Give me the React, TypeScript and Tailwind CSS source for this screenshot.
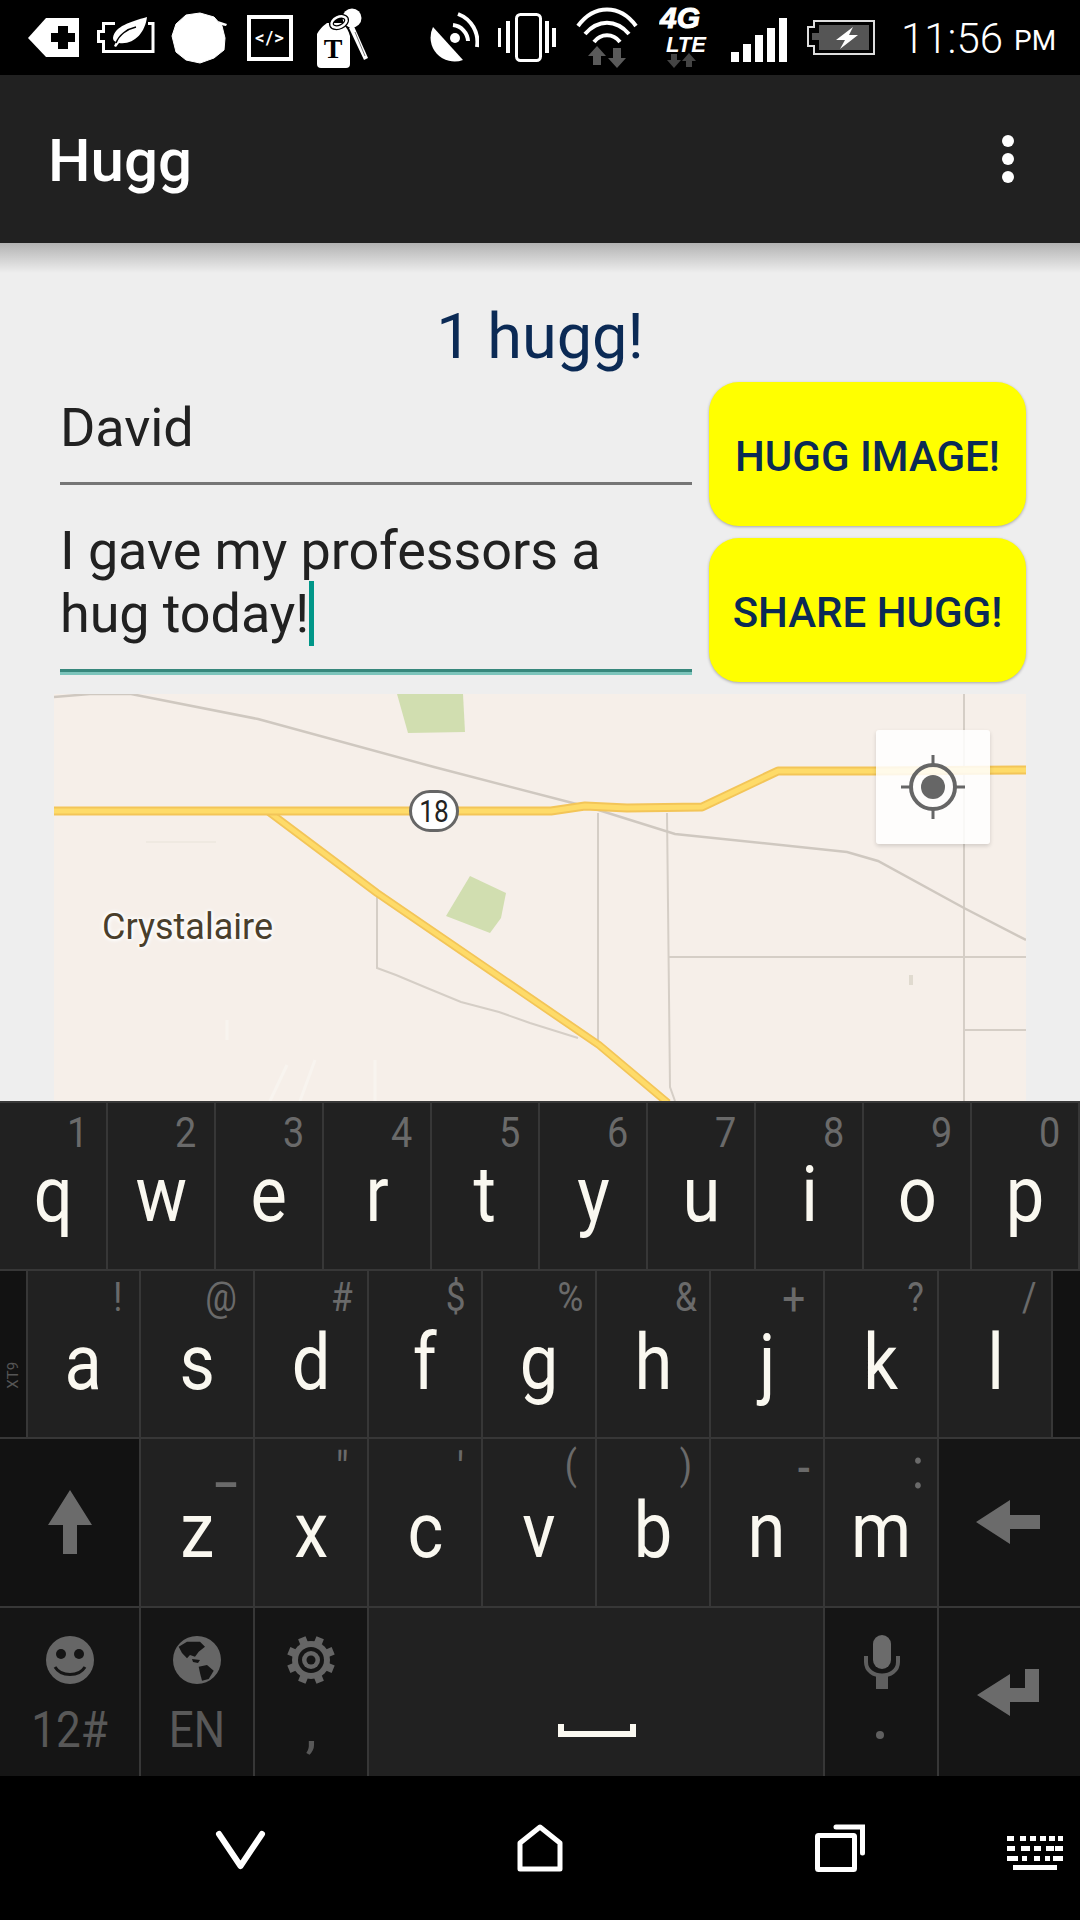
import type { ReactNode } from "react";

const Ico = ({ x, y, w, h, className, children }: { x: number; y: number; w: number; h: number; className?: string; children: ReactNode }) => (
  <svg width={w} height={h} viewBox={`${x} ${y} ${w} ${h}`} className={`block shrink-0 ${className ?? ""}`}>
    {children}
  </svg>
);

const GRAY = "#6b6b6b";

const StatusBar = () => (
  <div className="flex h-[75px] shrink-0 items-start bg-black pl-[28px] font-['Roboto',sans-serif] text-white">
    <Ico x={28} y={0} w={51} h={75}>
      <path d="M28 38 L46 18 H79 V57 H46 Z" fill="#fff" />
      <path d="M58 26 H68 V33 H75 V42 H68 V49 H58 V42 H51 V33 H58 Z" fill="#000" />
    </Ico>
    <Ico x={97} y={0} w={58} h={75} className="ml-[18px]">
      <path d="M115 23.500 H103.500 V31.500 H98.500 V41.500 H103.500 V51.500 H153 V23.500 H148" fill="none" stroke="#fff" strokeWidth="3" />
      <path d="M113 38 C115 26 130 22 147 17 C145 33 134 45 119 43 L116 47 L114 46 L116 42 C114 41 113 40 113 38 Z" fill="#fff" />
      <path d="M116 43 C119 35 127 29 136 27" fill="none" stroke="#000" strokeWidth="1.500" />
    </Ico>
    <Ico x={171} y={0} w={56} h={75} className="ml-[16px]">
      <path d="M172 36 L176 24 L186 15 L200 13 L214 17 L222 26 L225 38 L224 50 L214 58 L200 63 L186 60 L176 52 Z" fill="#fff" stroke="#fff" strokeWidth="1" strokeLinejoin="round" />
      <path d="M218 21 L227 24 L226 26 L220 25 Z" fill="#fff" />
    </Ico>
    <div className="ml-[20px] mt-[15px] flex h-[46px] w-[46px] shrink-0 items-center justify-center border-[4px] border-white text-[19px] font-medium tracking-[1px]">
      &lt;/&gt;
    </div>
    <Ico x={317} y={0} w={51} h={75} className="ml-[24px]">
      <circle cx="352" cy="18" r="9.500" fill="#fff" />
      <path d="M353 24 L368 58 L364 60 L349 28 Z" fill="#fff" />
      <path d="M355 32 L365 56" stroke="#777" strokeWidth="1" />
      <path d="M327 23 H342 Q348 28 350 36 V64 Q350 68 346 68 H321 Q317 68 317 64 V34 Q320 28 327 23 Z" fill="#fff" />
      <ellipse cx="339" cy="22" rx="8" ry="5" transform="rotate(-25 339 22)" fill="none" stroke="#000" strokeWidth="5" />
      <ellipse cx="339" cy="22" rx="8" ry="5" transform="rotate(-25 339 22)" fill="none" stroke="#fff" strokeWidth="2.500" />
      <text x="333" y="58" textAnchor="middle" fontFamily="'Liberation Serif',serif" fontWeight="700" fontSize="28" fill="#000">T</text>
    </Ico>
    <Ico x={430} y={0} w={49} h={75} className="ml-[62px]">
      <path d="M433 27 A24 24 0 0 0 463 60 Z" fill="#fff" />
      <circle cx="455" cy="38" r="5" fill="#fff" />
      <path d="M453 25 A17 17 0 0 1 468 41" fill="none" stroke="#fff" strokeWidth="4" />
      <path d="M458 14 A30 30 0 0 1 477 47" fill="none" stroke="#fff" strokeWidth="4" />
    </Ico>
    <Ico x={498} y={0} w={58} h={75} className="ml-[19px]">
      <rect x="498" y="28" width="3" height="19" fill="#fff" />
      <rect x="506" y="21" width="4" height="32" fill="#fff" />
      <rect x="516.500" y="14.500" width="24" height="46" rx="4" fill="none" stroke="#fff" strokeWidth="3" />
      <rect x="545" y="21" width="4" height="32" fill="#fff" />
      <rect x="552" y="28" width="4" height="19" fill="#fff" />
    </Ico>
    <Ico x={576} y={0} w={62} h={75} className="ml-[20px]">
      <g fill="none" stroke="#fff" strokeWidth="4">
        <path d="M578 26 C594 4 620 4 636 26" />
        <path d="M585 34 C598 19 616 19 629 34" />
        <path d="M594 42 C601 33 613 33 620 42" />
      </g>
      <path d="M597 46 L606 56 H601 V65 H593 V56 H588 Z" fill="#5a5a5a" />
      <path d="M617 68 L626 58 H621 V48 H613 V58 H608 Z" fill="#5a5a5a" />
    </Ico>
    <Ico x={659} y={0} w={48} h={75} className="ml-[21px]">
      <text x="660" y="28" fontFamily="'Liberation Sans',sans-serif" fontWeight="700" fontStyle="italic" fontSize="30" fill="#fff" stroke="#fff" strokeWidth="1">4G</text>
      <text x="666" y="52" fontFamily="'Liberation Sans',sans-serif" fontStyle="italic" fontSize="22" fontWeight="700" fill="#fff">LTE</text>
      <path d="M674 68 L667 60 H671 V54 H677 V60 H681 Z" fill="#444" />
      <path d="M689 53 L696 61 H692 V67 H686 V61 H682 Z" fill="#444" />
    </Ico>
    <Ico x={731} y={0} w={56} h={75} className="ml-[24px]">
      <rect x="731" y="52" width="8" height="10" fill="#fff" />
      <rect x="743" y="44" width="8" height="18" fill="#fff" />
      <rect x="755" y="35" width="8" height="27" fill="#fff" />
      <rect x="767" y="28" width="8" height="34" fill="#fff" />
      <rect x="779" y="18" width="8" height="44" fill="#fff" />
    </Ico>
    <Ico x={807} y={0} w={68} h={75} className="ml-[20px]">
      <path d="M814 27 H808 V46 H814 V54 H874 V21 H814 Z" fill="none" stroke="#ddd" strokeWidth="2" />
      <rect x="819" y="25" width="50" height="25" fill="#555" />
      <rect x="812" y="33" width="8" height="7" fill="#555" />
      <path d="M853 27 L836 40 H845 L840 49 L858 35 H849 Z" fill="#fff" />
    </Ico>
    <div className="ml-[26px] flex h-[75px] shrink-0 items-start whitespace-nowrap pt-[14px] leading-[50px]">
      <span className="text-[42px] font-light">11:56</span>
      <span className="ml-[11px] text-[28px] leading-[54px]">PM</span>
    </div>
  </div>
);

const AppBar = () => (
  <div className="relative z-10 flex h-[168px] shrink-0 items-center justify-between bg-[#212121] pl-[48px] pr-[66px] font-['Roboto',sans-serif]">
    <span className="pt-[4px] text-[60px] font-medium leading-none text-white">Hugg</span>
    <div className="flex flex-col gap-[6px]">
      <span className="h-[12px] w-[12px] rounded-full bg-white" />
      <span className="h-[12px] w-[12px] rounded-full bg-white" />
      <span className="h-[12px] w-[12px] rounded-full bg-white" />
    </div>
    <div className="absolute left-0 right-0 top-full h-[30px] bg-linear-to-b from-black/25 to-transparent" />
  </div>
);

const MapPanel = () => (
  <div className="relative h-[407px] w-[972px] shrink-0 overflow-hidden bg-[#f6efe9]">
    <Ico x={54} y={694} w={972} h={407}>
      <path d="M397 694 H463 L465 732 L408 733 Z" fill="#d1deb0" />
      <path d="M470 876 L506 893 L501 918 L490 933 L446 916 Z" fill="#d1deb0" />
      <g fill="none" stroke="#f8f4ef" strokeWidth="3">
        <path d="M227 1020 V1040" />
        <path d="M287 1065 L270 1101" />
        <path d="M315 1060 L300 1101" />
        <path d="M375 1060 V1101" />
      </g>
      <g fill="none" stroke="#d5cec6" strokeWidth="2">
        <path d="M964 694 V1101" />
        <path d="M669 957 H1026" />
        <path d="M964 1030 H1026" />
        <path d="M598 813 V1045" />
        <path d="M667 813 L670 1087 L675 1101" />
        <path d="M377 893 V968 L396 975 L427 988 L461 1002 L499 1012 L530 1023 L578 1038" />
        <path d="M146 842 H216" stroke="#efe9e1" />
        <path d="M911 975 V985" strokeWidth="4" stroke="#e0dacf" />
      </g>
      <path d="M54 697 L90 694 H131 L258 719 L434 767 L592 808 L675 834 L847 852 L878 861 L964 908 L1026 940" fill="none" stroke="#cfc8c0" strokeWidth="2.500" />
      <g fill="none" strokeLinejoin="round">
        <path d="M269 812 L377 893 L599 1045 L668 1103" stroke="#f3c558" strokeWidth="8" />
        <path d="M269 812 L377 893 L599 1045 L668 1103" stroke="#fedb69" strokeWidth="4.500" />
        <path d="M54 811 H551 L585 806 L627 808 L702 807 L778 771 H876 L1026 770" stroke="#f3c558" strokeWidth="9" />
        <path d="M54 811 H551 L585 806 L627 808 L702 807 L778 771 H876 L1026 770" stroke="#fedb69" strokeWidth="5" />
      </g>
    </Ico>
    <div className="absolute left-[355px] top-[96px] flex h-[42px] w-[50px] items-center justify-center rounded-[21px] border-[3px] border-[#666] bg-white font-['Roboto',sans-serif] leading-none text-[#222]">
      <span className="inline-block scale-x-[.82] text-[32px]">18</span>
    </div>
    <div className="absolute left-[48px] top-[215px] font-['Roboto',sans-serif] text-[36px] leading-none text-[#4a3f2c] [text-shadow:0_0_3px_#fff,0_0_4px_#fff,0_0_5px_#fff,0_0_6px_#fff]">
      Crystalaire
    </div>
    <div className="absolute left-[822px] top-[36px] flex h-[114px] w-[114px] items-center justify-center rounded-[3px] bg-white/85 shadow-[0_2px_4px_rgba(0,0,0,0.15)]">
      <svg width="66" height="66" viewBox="0 0 66 66">
        <circle cx="33" cy="33" r="22" fill="none" stroke="#666" strokeWidth="4" />
        <circle cx="33" cy="33" r="12" fill="#666" />
        <path d="M33 1 V11 M33 55 V65 M1 33 H11 M55 33 H65" stroke="#666" strokeWidth="3" />
      </svg>
    </div>
  </div>
);

const Content = () => (
  <main className="flex min-h-0 flex-1 flex-col bg-[#eeeeee] px-[54px] font-['Roboto',sans-serif]">
    <div className="h-[139px] pt-[57px] text-center text-[63px] leading-[74px] text-[#0b2a55]">1 hugg!</div>
    <div className="flex h-[300px] shrink-0 justify-between pl-[6px]">
      <div className="flex w-[632px] flex-col text-[54px] leading-[63px] tracking-[-0.1px] text-[#212121]">
        <div className="h-[103px] border-b-[3px] border-[#757575] pt-[14px]">David</div>
        <div className="h-[184px] pt-[34px]">
          I gave my professors a
          <br />
          hug today!
          <span className="relative">
            <span className="absolute left-[0px] top-[-1px] h-[65px] w-[5px] bg-[#009688]" />
          </span>
        </div>
        <div className="h-[3px] bg-[#37877c]" />
        <div className="h-[3px] bg-[#7cc4bb]" />
      </div>
      <div className="flex w-[317px] flex-col gap-[12px] text-[42px] font-medium text-[#0b2a55]">
        <div className="flex h-[144px] items-center justify-center rounded-[30px] bg-[#ffff00] pt-[4px] shadow-[0_1px_3px_rgba(0,0,0,0.3)]">HUGG IMAGE!</div>
        <div className="flex h-[144px] items-center justify-center rounded-[30px] bg-[#ffff00] pt-[4px] shadow-[0_1px_3px_rgba(0,0,0,0.3)]">SHARE HUGG!</div>
      </div>
    </div>
    <div className="mt-[12px]">
      <MapPanel />
    </div>
  </main>
);

const Key = ({ w, label, hint, hintClass }: { w: string; label: string; hint: string; hintClass: string }) => (
  <div className={`relative flex h-full shrink-0 justify-center border-r-2 border-[#373737] bg-[#212121] pt-[53px] ${w}`}>
    <span className="inline-block scale-x-[.88] text-[78px] leading-none text-[#faf8f0]">{label}</span>
    <span className={`absolute origin-right scale-x-[.88] leading-none text-[#6a6a6a] ${hintClass}`}>{hint}</span>
  </div>
);

const row1 = [
  ["q", "1"],
  ["w", "2"],
  ["e", "3"],
  ["r", "4"],
  ["t", "5"],
  ["y", "6"],
  ["u", "7"],
  ["i", "8"],
  ["o", "9"],
  ["p", "0"],
];
const row2 = [
  ["a", "!", "right-[17px] top-[7px] text-[40px]", "w-[113px]"],
  ["s", "@", "right-[16px] top-[7px] text-[40px]", "w-[114px]"],
  ["d", "#", "right-[14px] top-[7px] text-[40px]", "w-[114px]"],
  ["f", "$", "right-[16px] top-[7px] text-[40px]", "w-[114px]"],
  ["g", "%", "right-[12px] top-[7px] text-[40px]", "w-[114px]"],
  ["h", "&", "right-[12px] top-[7px] text-[40px]", "w-[114px]"],
  ["j", "+", "right-[18px] top-[5px] text-[46px]", "w-[114px]"],
  ["k", "?", "right-[13px] top-[7px] text-[40px]", "w-[114px]"],
  ["l", "/", "right-[14px] top-[7px] text-[40px]", "w-[114px]"],
];
const row3 = [
  ["z", "_", "right-[17px] top-[0px] text-[52px] font-medium"],
  ["x", '"', "right-[18px] top-[7px] text-[46px]"],
  ["c", "'", "right-[17px] top-[7px] text-[46px]"],
  ["v", "(", "right-[18px] top-[7px] text-[40px]"],
  ["b", ")", "right-[17px] top-[7px] text-[40px]"],
  ["n", "-", "right-[12px] top-[6px] text-[46px] font-medium"],
  ["m", ":", "right-[13px] top-[0px] text-[58px]"],
];

const gearTeeth = [0, 45, 90, 135, 180, 225, 270, 315];

const Keyboard = () => (
  <div className="flex h-[675px] shrink-0 flex-col border-t-2 border-[#383838] bg-[#212121] font-['Roboto',sans-serif]">
    <div className="flex h-[168px] shrink-0 border-b-2 border-[#373737]">
      {row1.map(([k, h]) => (
        <Key key={k} w="w-[108px]" label={k} hint={h} hintClass="right-[18px] top-[8px] text-[43px]" />
      ))}
    </div>
    <div className="flex h-[168px] shrink-0 border-b-2 border-[#373737]">
      <div className="flex h-full w-[28px] shrink-0 items-center justify-center border-r-2 border-[#373737] bg-[#121212] pt-[42px]">
        <span className="-rotate-90 text-[15px] text-[#555]">XT9</span>
      </div>
      {row2.map(([k, h, c, w]) => (
        <Key key={k} w={w} label={k} hint={h} hintClass={c} />
      ))}
      <div className="h-full flex-1 bg-[#121212]" />
    </div>
    <div className="flex h-[169px] shrink-0 border-b-2 border-[#373737]">
      <div className="h-full w-[141px] shrink-0 border-r-2 border-[#373737] bg-[#121212]">
        <Ico x={0} y={1439} w={139} h={167}>
          <path d="M70 1490 L92 1525 H77 V1554 H63 V1525 H48 Z" fill={GRAY} />
        </Ico>
      </div>
      {row3.map(([k, h, c]) => (
        <Key key={k} w="w-[114px]" label={k} hint={h} hintClass={c} />
      ))}
      <div className="h-full flex-1 bg-[#151515]">
        <Ico x={939} y={1439} w={141} h={167}>
          <path d="M976 1522 L1010 1500 V1515 H1040 V1529 H1010 V1544 Z" fill={GRAY} />
        </Ico>
      </div>
    </div>
    <div className="flex h-[168px] shrink-0">
      <div className="flex h-full w-[141px] shrink-0 flex-col items-center border-r-2 border-[#373737] bg-[#151515] pt-[27px] text-[50px] leading-none text-[#585858]">
        <svg width="50" height="50" viewBox="0 0 50 50">
          <circle cx="25" cy="25" r="24" fill="#666" />
          <circle cx="16" cy="19" r="5" fill="#151515" />
          <circle cx="34" cy="19" r="5" fill="#151515" />
          <path d="M10 32 C16 42 34 42 40 32" fill="none" stroke="#151515" strokeWidth="3" />
        </svg>
        <span className="mt-[20px] inline-block scale-x-[.88]">12#</span>
      </div>
      <div className="flex h-full w-[114px] shrink-0 flex-col items-center border-r-2 border-[#373737] bg-[#151515] pt-[27px] text-[50px] leading-none text-[#585858]">
        <svg width="50" height="50" viewBox="0 0 50 50">
          <circle cx="25" cy="25" r="24" fill="#666" />
          <path d="M6.700 11.700 L15 6.700 L28 6.700 L33 11.700 L26.700 16.700 L23 21.700 L18 20 L15 23.300 L10 18 Z" fill="#151515" />
          <path d="M20 24 L28 25 L26 28 L21 27 Z" fill="#151515" />
          <path d="M26.700 31.700 L35 30 L41.700 35.700 L36.700 44 L30 45.700 L28 38 Z" fill="#151515" />
        </svg>
        <span className="mt-[20px] inline-block scale-x-[.88]">EN</span>
      </div>
      <div className="flex h-full w-[114px] shrink-0 flex-col items-center border-r-2 border-[#373737] bg-[#151515] pt-[27px] text-[50px] leading-none text-[#585858]">
        <svg width="50" height="50" viewBox="0 0 50 50">
          {gearTeeth.map((a) => (
            <rect key={a} x="21" y="1" width="8" height="8" fill="#666" transform={`rotate(${a + 22.5} 25 25)`} />
          ))}
          <circle cx="25" cy="25" r="19" fill="#666" />
          <circle cx="25" cy="25" r="13" fill="#151515" />
          <circle cx="25" cy="25" r="9" fill="#666" />
          <circle cx="25" cy="25" r="4.500" fill="#151515" />
        </svg>
        <span className="mt-[20px] inline-block font-medium">,</span>
      </div>
      <div className="h-full w-[456px] shrink-0 border-r-2 border-[#373737] bg-[#212121]">
        <Ico x={369} y={1608} w={454} h={168}>
          <path d="M558 1724 H564 V1731 H630 V1724 H636 V1737 H558 Z" fill="#faf8f0" />
        </Ico>
      </div>
      <div className="h-full w-[114px] shrink-0 border-r-2 border-[#373737] bg-[#151515]">
        <Ico x={825} y={1608} w={112} h={168}>
          <rect x="873" y="1635" width="18" height="34" rx="9" fill={GRAY} />
          <path d="M866 1656 V1662 C866 1680 898 1680 898 1662 V1656" fill="none" stroke="#5f5f5f" strokeWidth="4" />
          <rect x="876" y="1674" width="12" height="15" fill="#5f5f5f" />
          <circle cx="880" cy="1735" r="4" fill="#5f5f5f" />
        </Ico>
      </div>
      <div className="h-full flex-1 bg-[#151515]">
        <Ico x={939} y={1608} w={141} h={168}>
          <path d="M977 1695 L1010 1674 V1688 H1025 V1669 H1039 V1702 H1010 V1716 Z" fill={GRAY} />
        </Ico>
      </div>
    </div>
  </div>
);

const kbRows = [
  [[1007, 7], [1020, 6], [1030, 6], [1040, 6], [1049, 6], [1058, 5]],
  [[1007, 8], [1021, 9], [1034, 7], [1046, 8], [1055, 8]],
  [[1007, 11], [1022, 5], [1034, 6], [1045, 5], [1053, 10]],
];

const NavBar = () => (
  <div className="flex h-[144px] shrink-0 items-start bg-black pl-[215px]">
    <Ico x={215} y={1776} w={52} h={144}>
      <path d="M219 1834 L240.500 1866 L262 1834" fill="none" stroke="#fff" strokeWidth="6" strokeLinecap="round" strokeLinejoin="round" />
    </Ico>
    <Ico x={516} y={1776} w={48} h={144} className="ml-[249px]">
      <path d="M520 1843 L540 1827 L560 1843 V1869 H520 Z" fill="none" stroke="#fff" strokeWidth="5" strokeLinejoin="round" />
    </Ico>
    <Ico x={813} y={1776} w={54} h={144} className="ml-[249px]">
      <rect x="817.500" y="1835.500" width="37" height="34" rx="1" fill="none" stroke="#fff" strokeWidth="5" />
      <path d="M836 1827 H862.500 V1853" fill="none" stroke="#fff" strokeWidth="5" strokeLinecap="round" />
    </Ico>
    <Ico x={1007} y={1776} w={56} h={144} className="ml-[140px]">
      {kbRows.map((row, i) =>
        row.map(([x, w]) => <rect key={`${i}-${x}`} x={x} y={1836 + i * 10} width={w} height="5" fill="#fff" />)
      )}
      <rect x="1013" y="1865" width="44" height="5" fill="#fff" />
    </Ico>
  </div>
);

export default function App() {
  return (
    <div className="flex h-[1920px] w-[1080px] flex-col overflow-hidden bg-[#eeeeee]">
      <StatusBar />
      <AppBar />
      <Content />
      <Keyboard />
      <NavBar />
    </div>
  );
}
